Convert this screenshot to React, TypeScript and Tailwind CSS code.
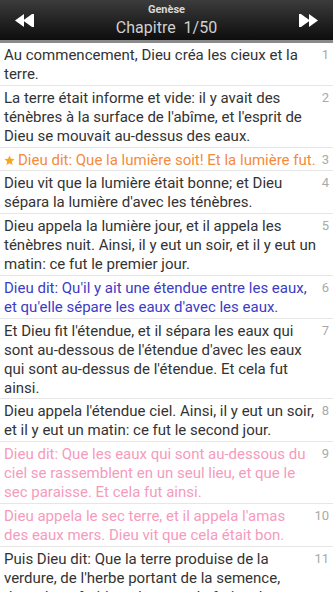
import React from "react";

type Verse = { n: number; text: string; tone?: "orange" | "blue" | "pink"; star?: boolean };

const verses: Verse[] = [
  { n: 1, text: "Au commencement, Dieu créa les cieux et la terre." },
  {
    n: 2,
    text: "La terre était informe et vide: il y avait des ténèbres à la surface de l'abîme, et l'esprit de Dieu se mouvait au-dessus des eaux.",
  },
  { n: 3, text: "Dieu dit: Que la lumière soit! Et la lumière fut.", tone: "orange", star: true },
  { n: 4, text: "Dieu vit que la lumière était bonne; et Dieu sépara la lumière d'avec les ténèbres." },
  {
    n: 5,
    text: "Dieu appela la lumière jour, et il appela les ténèbres nuit. Ainsi, il y eut un soir, et il y eut un matin: ce fut le premier jour.",
  },
  { n: 6, text: "Dieu dit: Qu'il y ait une étendue entre les eaux, et qu'elle sépare les eaux d'avec les eaux.", tone: "blue" },
  {
    n: 7,
    text: "Et Dieu fit l'étendue, et il sépara les eaux qui sont au-dessous de l'étendue d'avec les eaux qui sont au-dessus de l'étendue. Et cela fut ainsi.",
  },
  { n: 8, text: "Dieu appela l'étendue ciel. Ainsi, il y eut un soir, et il y eut un matin: ce fut le second jour." },
  {
    n: 9,
    text: "Dieu dit: Que les eaux qui sont au-dessous du ciel se rassemblent en un seul lieu, et que le sec paraisse. Et cela fut ainsi.",
    tone: "pink",
  },
  {
    n: 10,
    text: "Dieu appela le sec terre, et il appela l'amas des eaux mers. Dieu vit que cela était bon.",
    tone: "pink",
  },
  {
    n: 11,
    text: "Puis Dieu dit: Que la terre produise de la verdure, de l'herbe portant de la semence, des arbres fruitiers donnant du fruit selon leur espèce.",
  },
];

const toneClass = {
  orange: "text-[#f58a3c]",
  blue: "text-[#3c3cc4]",
  pink: "text-[#f59bbd]",
};

function Arrows({ dir }: { dir: "left" | "right" }) {
  return (
    <svg width="19" height="13" viewBox="0 0 19 13" className={dir === "right" ? "rotate-180" : ""}>
      <path d="M0 6.5 L9 0 V13 Z" fill="#fff" />
      <path d="M8 6.5 L17 0 V13 Z" fill="#fff" />
      <rect x="17" y="0" width="2" height="13" fill="#fff" />
    </svg>
  );
}

function Star() {
  return (
    <svg width="11" height="11" viewBox="0 0 24 24" className="mr-[3px] inline-block align-[-1px]">
      <path d="M12 1l3.2 7.2 7.8.7-5.9 5.2 1.8 7.7L12 17.8 5.1 21.8l1.8-7.7L1 8.9l7.8-.7z" fill="#f5a623" />
    </svg>
  );
}

export default function App() {
  return (
    <div className="flex h-[592px] w-[333px] flex-col overflow-hidden bg-white font-['Roboto',sans-serif]">
      <header className="flex h-[43px] shrink-0 items-center justify-between border-b-[3px] border-[#8a8a8a] bg-gradient-to-b from-[#3c3c3c] to-[#0e0e0e] px-[15px]">
        <Arrows dir="left" />
        <div className="flex flex-col items-center leading-none">
          <span className="text-[11px] font-bold text-[#d8d8d8]">Genèse</span>
          <span className="mt-[5px] text-[16px] text-[#d0d0d0]">Chapitre&nbsp; 1/50</span>
        </div>
        <Arrows dir="right" />
      </header>
      <ul className="flex flex-col">
        {verses.map((v) => (
          <li key={v.n} className="flex border-b border-[#e6e6e6] pb-[1px] pl-[4px] pr-[4px] pt-[3px]">
            <p className={`flex-1 text-[15px] leading-[18.9px] ${v.tone ? toneClass[v.tone] : "text-[#333]"}`}>
              {v.star && <Star />}
              {v.text}
            </p>
            <span
              className={`min-w-[9px] shrink-0 text-right text-[13px] leading-[18.9px] text-[#aaa] whitespace-nowrap ${
                v.n < 10 ? "pl-[2px]" : "pl-[9px]"
              }`}
            >
              {v.n}
            </span>
          </li>
        ))}
      </ul>
    </div>
  );
}
